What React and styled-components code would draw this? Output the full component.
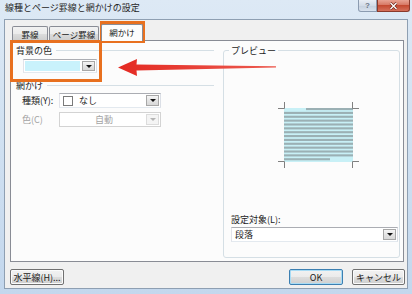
import React from "react";
import styled, { createGlobalStyle } from "styled-components";

const FONT = `"Noto Sans CJK JP", "Noto Sans", sans-serif`;

const GlobalStyle = createGlobalStyle`
  html, body {
    margin: 0;
    padding: 0;
  }
  body {
    width: 412px;
    height: 294px;
    overflow: hidden;
    background: #cfe0f1;
  }
`;

const Window = styled.div`
  position: relative;
  width: 412px;
  height: 294px;
  box-sizing: border-box;
  display: flex;
  flex-direction: column;
  padding: 0 4px 5px 4px;
  background: linear-gradient(180deg, #dde9f5 0%, #d2e2f2 40%, #c3d7ed 100%);
  font-family: ${FONT};
  font-size: 9px;
  color: #1b1b1b;
  overflow: hidden;
`;

const TitleBar = styled.div`
  height: 19px;
  display: flex;
  align-items: flex-start;
  margin-right: -2px;
`;

const Title = styled.div`
  padding: 2px 0 0 1px;
  line-height: 12px;
  color: #262626;
`;

const CaptionButtons = styled.div`
  margin-left: auto;
  display: flex;
`;

const HelpButton = styled.div`
  width: 19px;
  height: 12px;
  box-sizing: border-box;
  border: 1px solid #8b9bb0;
  border-top: none;
  border-radius: 0 0 0 3px;
  background: linear-gradient(#e9eef5, #d3dce8 50%, #c4cfdd 51%, #d9e2ee);
  display: flex;
  align-items: center;
  justify-content: center;
  color: #6a7686;
  font-family: "Liberation Sans", sans-serif;
  font-size: 8px;
  font-weight: bold;
`;

const CloseButton = styled.div`
  width: 33px;
  height: 12px;
  box-sizing: border-box;
  border: 1px solid #8a3a2c;
  border-top: none;
  border-radius: 0 0 3px 0;
  background: linear-gradient(#e8a393, #d77864 45%, #c44a31 50%, #d5705a);
  display: flex;
  align-items: center;
  justify-content: center;
`;

const Client = styled.div`
  flex: 1;
  display: flex;
  flex-direction: column;
  background: #f0f0f0;
  border: 1px solid #8e9fb2;
  padding: 0 2px 3px 5px;
`;

const TabStrip = styled.div`
  position: relative;
  z-index: 1;
  display: flex;
  align-items: flex-end;
  height: 16px;
  margin-top: 4px;
  padding-left: 2px;
`;

const Tab = styled.div`
  box-sizing: border-box;
  width: ${(p) => p.$w}px;
  height: ${(p) => (p.$active ? 17 : 14)}px;
  margin-left: ${(p) => p.$ml || 0}px;
  margin-bottom: ${(p) => (p.$active ? -1 : 0)}px;
  border: 1px solid #898c95;
  border-bottom: none;
  border-radius: 2px 2px 0 0;
  background: ${(p) =>
    p.$active
      ? "#fcfcfc"
      : "linear-gradient(#f2f2f2, #ebebeb 50%, #dddddd 51%, #cfcfcf)"};
  display: flex;
  align-items: center;
  justify-content: center;
  padding-bottom: ${(p) => (p.$active ? 2 : 0)}px;
  font-size: 8.5px;
  white-space: nowrap;
`;

const Panel = styled.div`
  height: 222px;
  box-sizing: border-box;
  margin-right: 1px;
  border: 1px solid #898c95;
  background: #fcfcfc;
  display: flex;
  gap: 9px;
  padding: 4px 3px 3px 5px;
`;

const LeftCol = styled.div`
  width: 198px;
  display: flex;
  flex-direction: column;
`;

const GroupHeader = styled.div`
  display: flex;
  align-items: center;
  height: 11px;
  line-height: 11px;
  margin-top: ${(p) => p.$mt || 0}px;
  color: #1b1b1b;

  &::after {
    content: "";
    flex: 1;
    height: 1px;
    background: #d5dfe5;
    margin-left: 4px;
  }
`;

const Combo = styled.div`
  box-sizing: border-box;
  width: ${(p) => (p.$w ? `${p.$w}px` : "auto")};
  height: ${(p) => p.$h || 15}px;
  margin: ${(p) => p.$m || 0};
  border: 1px solid;
  border-color: ${(p) =>
    p.$disabled ? "#d3d3d3" : "#abadb3 #dbdfe6 #e3e9ef #e2e3ea"};
  background: #fff;
  display: flex;
  align-items: stretch;
`;

const Swatch = styled.div`
  flex: 1;
  margin: 1px;
  background: #c9f2fc;
`;

const ComboText = styled.div`
  flex: 1;
  display: flex;
  align-items: center;
  justify-content: ${(p) => (p.$center ? "center" : "flex-start")};
  gap: 6px;
  padding-left: 3px;
  line-height: 11px;
  color: ${(p) => (p.$disabled ? "#a3a3a3" : "#1b1b1b")};
`;

const CheckSquare = styled.span`
  width: 10px;
  height: 10px;
  box-sizing: border-box;
  border: 1px solid #7a7a7a;
  background: #fff;
`;

const DropButton = styled.div`
  width: 13px;
  box-sizing: border-box;
  margin: 1px;
  border: 1px solid ${(p) => (p.$disabled ? "#dcdcdc" : "#a7a7a7")};
  background: ${(p) =>
    p.$disabled ? "#f4f4f4" : "linear-gradient(#f6f6f6, #e4e4e4 50%, #d8d8d8)"};
  display: flex;
  align-items: center;
  justify-content: center;

  &::after {
    content: "";
    border-left: 3px solid transparent;
    border-right: 3px solid transparent;
    border-top: 3px solid ${(p) => (p.$disabled ? "#b4b4b4" : "#111")};
  }
`;

const FieldRow = styled.div`
  display: flex;
  align-items: center;
  padding-left: 6px;
  margin-top: ${(p) => p.$mt}px;
`;

const FieldLabel = styled.span`
  width: 37px;
  line-height: 11px;
  color: ${(p) => (p.$disabled ? "#a3a3a3" : "#1b1b1b")};
`;

const PreviewGroup = styled.fieldset`
  flex: 1;
  min-width: 0;
  margin: 0;
  box-sizing: border-box;
  border: 1px solid #d5dfe5;
  border-radius: 3px;
  padding: 0 1px 15px 7px;
  display: flex;
  flex-direction: column;
`;

const Legend = styled.legend`
  padding: 0 2px;
  margin-left: -2px;
  height: 11px;
  line-height: 11px;
  color: #1b1b1b;
`;

const PreviewArea = styled.div`
  flex: 1;
  padding: 44px 0 0 45px;
`;

const TargetLabel = styled.div`
  line-height: 11px;
  margin-bottom: 2px;
`;

const ButtonRow = styled.div`
  display: flex;
  align-items: center;
  padding-top: 7px;
`;

const Button = styled.button`
  box-sizing: border-box;
  height: 16px;
  width: ${(p) => p.$w}px;
  margin-left: ${(p) => p.$ml || "0"};
  padding: 0;
  font-family: ${FONT};
  font-size: 9px;
  line-height: 11px;
  color: #1b1b1b;
  border: 1px solid ${(p) => (p.$default ? "#3c7fb1" : "#707070")};
  border-radius: 2px;
  background: linear-gradient(#f2f2f2 0%, #ebebeb 50%, #dddddd 51%, #cfcfcf 100%);
  box-shadow: inset 0 0 0 1px ${(p) => (p.$default ? "#a9dcf5" : "#fbfbfb")};
`;

const Highlight = styled.div`
  position: absolute;
  left: ${(p) => p.$x}px;
  top: ${(p) => p.$y}px;
  width: ${(p) => p.$w}px;
  height: ${(p) => p.$h}px;
  box-sizing: border-box;
  border: 3px solid #e8701f;
  pointer-events: none;
`;

const ArrowOverlay = styled.svg`
  position: absolute;
  left: 110px;
  top: 52px;
  pointer-events: none;
`;

function PreviewDrawing() {
  const rows = [];
  for (let i = 0; i < 14; i++) {
    const y = 8 + i * 3.86;
    const x1 = i === 0 ? 30 : 8;
    const x2 = i === 13 ? 54 : 77;
    rows.push(<rect key={i} x={x1} y={y} width={x2 - x1} height={2.1} fill="#9bb0b4" />);
  }
  const mark = "#808080";
  return (
    <svg width="85" height="70" viewBox="0 0 85 70">
      <rect x="8" y="8" width="69" height="54" fill="#c8f0f6" />
      {rows}
      <g stroke={mark} strokeWidth="1" fill="none">
        <path d="M8.5 2v6.5H2" />
        <path d="M76.5 2v6.5H83" />
        <path d="M8.5 68v-6.5H2" />
        <path d="M76.5 68v-6.5H83" />
      </g>
    </svg>
  );
}

export default function App() {
  return (
    <>
      <GlobalStyle />
      <Window>
        <TitleBar>
          <Title>線種とページ罫線と網かけの設定</Title>
          <CaptionButtons>
            <HelpButton>?</HelpButton>
            <CloseButton>
              <svg width="9" height="8" viewBox="0 0 9 8">
                <path d="M1.5 1l6 6M7.5 1l-6 6" stroke="#6b2418" strokeWidth="2.6" />
                <path d="M1.5 1l6 6M7.5 1l-6 6" stroke="#fff" strokeWidth="1.4" />
              </svg>
            </CloseButton>
          </CaptionButtons>
        </TitleBar>

        <Client>
          <TabStrip>
            <Tab $w={36}>罫線</Tab>
            <Tab $w={50} $ml={1}>ページ罫線</Tab>
            <Tab $w={42} $ml={2} $active>網かけ</Tab>
          </TabStrip>

          <Panel>
            <LeftCol>
              <GroupHeader>背景の色</GroupHeader>
              <Combo $w={74} $h={14} $m="3px 0 0 7px">
                <Swatch />
                <DropButton />
              </Combo>

              <GroupHeader $mt={7}>網かけ</GroupHeader>
              <FieldRow $mt={2}>
                <FieldLabel>種類(Y):</FieldLabel>
                <Combo $w={102}>
                  <ComboText>
                    <CheckSquare />
                    なし
                  </ComboText>
                  <DropButton />
                </Combo>
              </FieldRow>
              <FieldRow $mt={4}>
                <FieldLabel $disabled>色(C)</FieldLabel>
                <Combo $w={102} $disabled>
                  <ComboText $center $disabled>自動</ComboText>
                  <DropButton $disabled />
                </Combo>
              </FieldRow>
            </LeftCol>

            <PreviewGroup>
              <Legend>プレビュー</Legend>
              <PreviewArea>
                <PreviewDrawing />
              </PreviewArea>
              <TargetLabel>設定対象(L):</TargetLabel>
              <Combo>
                <ComboText>段落</ComboText>
                <DropButton />
              </Combo>
            </PreviewGroup>
          </Panel>

          <ButtonRow>
            <Button $w={54}>水平線(H)...</Button>
            <Button $w={54} $ml="auto" $default>OK</Button>
            <Button $w={53} $ml="9px">キャンセル</Button>
          </ButtonRow>
        </Client>

        <Highlight $x={100} $y={21} $w={45} $h={22} />
        <Highlight $x={10} $y={40} $w={92} $h={42} />

        <ArrowOverlay width="170" height="26" viewBox="0 0 170 26">
          <defs>
            <linearGradient id="shaft" x1="0" y1="0" x2="1" y2="0">
              <stop offset="0" stopColor="#e42a22" />
              <stop offset="1" stopColor="#ec5a4f" />
            </linearGradient>
          </defs>
          <path
            d="M8 15.5 L27 7 L26.5 12.5 L166 14.3 L166 15.6 L26.5 18.5 L27 24 Z"
            fill="url(#shaft)"
          />
        </ArrowOverlay>
      </Window>
    </>
  );
}
